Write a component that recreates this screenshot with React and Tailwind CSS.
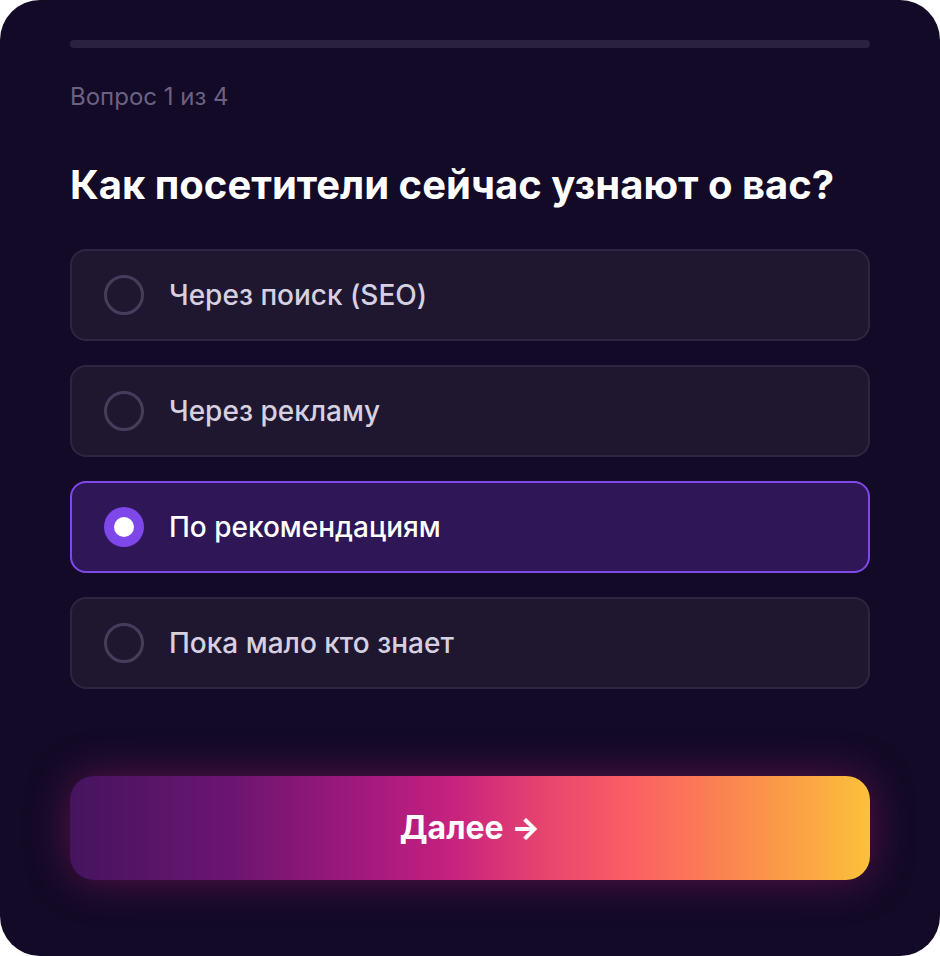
import { useState } from 'react';

const options = [
    'Через поиск (SEO)',
    'Через рекламу',
    'По рекомендациям',
    'Пока мало кто знает',
];

const App = () => {
    const [selected, setSelected] = useState(2);

    return (
        <div className="min-h-screen bg-white" style={{ fontFamily: 'Inter, "Noto Sans", sans-serif' }}>
            <div className="w-[940px] h-[956px] bg-[#120a26] rounded-[40px] px-[70px] pt-10 flex flex-col overflow-hidden">
                {/* прогресс */}
                <div className="h-2 rounded-full bg-[#2a2140]">
                    <div className="h-2 w-0 rounded-full bg-[#7c3aed]" />
                </div>

                <div className="mt-[34px] text-[24px] leading-[30px] text-[#6b6282]">Вопрос 1 из 4</div>

                <h1 className="mt-[49px] text-[40px] leading-[48px] font-bold text-white">
                    Как посетители сейчас узнают о вас?
                </h1>

                <div className="mt-10 flex flex-col gap-6">
                    {options.map((label, index) => {
                        const isActive = index === selected;
                        return (
                            <button
                                key={label}
                                onClick={() => setSelected(index)}
                                className={`h-[92px] flex items-center gap-[25px] px-[32px] rounded-2xl border-2 text-left ${
                                    isActive
                                        ? 'bg-[#2e1657] border-[#7f48ea]'
                                        : 'bg-[#1f1730] border-[#2e2640]'
                                }`}
                            >
                                {isActive ? (
                                    <span className="w-10 h-10 rounded-full bg-[#7d47ea] flex items-center justify-center">
                                        <span className="w-5 h-5 rounded-full bg-white" />
                                    </span>
                                ) : (
                                    <span className="w-10 h-10 rounded-full border-[3px] border-[#463d5c]" />
                                )}
                                <span
                                    className={`text-[28px] font-medium ${
                                        isActive ? 'text-white' : 'text-[#d6d0e0]'
                                    }`}
                                >
                                    {label}
                                </span>
                            </button>
                        );
                    })}
                </div>

                <button className="mt-[87px] h-[104px] rounded-3xl text-white text-[32px] font-bold flex items-center justify-center gap-2 bg-[linear-gradient(90deg,#45145f_0%,#6b1570_20%,#a3197e_37%,#c4207f_47%,#e9466f_60%,#fb5f64_70%,#fb8450_82%,#fba544_92%,#fbc13a_100%)] shadow-[0_0_44px_rgba(200,30,120,0.4)]">
                    <span>Далее</span>
                    <span className="text-[30px] font-extrabold">→</span>
                </button>
            </div>
        </div>
    );
};

export default App;
